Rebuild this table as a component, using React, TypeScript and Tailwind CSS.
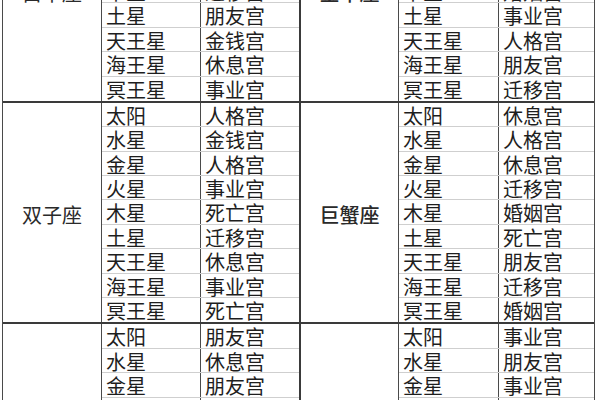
import React from "react";

type Half = { sign: string; rows: [string, string][] };
type Group = { left: Half; right: Half };

const groups: Group[] = [
  {
    left: {
      sign: "白羊座",
      rows: [
        ["太阳", "人格宫"],
        ["水星", "金钱宫"],
        ["金星", "事业宫"],
        ["火星", "婚姻宫"],
        ["木星", "迁移宫"],
        ["土星", "朋友宫"],
        ["天王星", "金钱宫"],
        ["海王星", "休息宫"],
        ["冥王星", "事业宫"],
      ],
    },
    right: {
      sign: "金牛座",
      rows: [
        ["太阳", "婚姻宫"],
        ["水星", "死亡宫"],
        ["金星", "休息宫"],
        ["火星", "朋友宫"],
        ["木星", "婚姻宫"],
        ["土星", "事业宫"],
        ["天王星", "人格宫"],
        ["海王星", "朋友宫"],
        ["冥王星", "迁移宫"],
      ],
    },
  },
  {
    left: {
      sign: "双子座",
      rows: [
        ["太阳", "人格宫"],
        ["水星", "金钱宫"],
        ["金星", "人格宫"],
        ["火星", "事业宫"],
        ["木星", "死亡宫"],
        ["土星", "迁移宫"],
        ["天王星", "休息宫"],
        ["海王星", "事业宫"],
        ["冥王星", "死亡宫"],
      ],
    },
    right: {
      sign: "巨蟹座",
      rows: [
        ["太阳", "休息宫"],
        ["水星", "人格宫"],
        ["金星", "休息宫"],
        ["火星", "迁移宫"],
        ["木星", "婚姻宫"],
        ["土星", "死亡宫"],
        ["天王星", "朋友宫"],
        ["海王星", "迁移宫"],
        ["冥王星", "婚姻宫"],
      ],
    },
  },
  {
    left: {
      sign: "狮子座",
      rows: [
        ["太阳", "朋友宫"],
        ["水星", "休息宫"],
        ["金星", "朋友宫"],
        ["火星", "事业宫"],
        ["木星", "金钱宫"],
        ["土星", "人格宫"],
        ["天王星", "迁移宫"],
        ["海王星", "婚姻宫"],
        ["冥王星", "死亡宫"],
      ],
    },
    right: {
      sign: "处女座",
      rows: [
        ["太阳", "事业宫"],
        ["水星", "朋友宫"],
        ["金星", "事业宫"],
        ["火星", "休息宫"],
        ["木星", "人格宫"],
        ["土星", "金钱宫"],
        ["天王星", "婚姻宫"],
        ["海王星", "死亡宫"],
        ["冥王星", "迁移宫"],
      ],
    },
  },
];

function LeftHalf({ half }: { half: Half }) {
  return (
    <div className="flex">
      <div className="w-[99px] border-r border-[#4a4a4a] flex items-center justify-center pt-[4px] text-[20px] leading-[24px] text-[#2a2a2a]">
        {half.sign}
      </div>
      <div className="w-[197px] flex flex-col">
        {half.rows.map(([p, h], i) => (
          <div
            key={i}
            className={
              "h-[24.4px] flex " +
              (i < half.rows.length - 1 ? "border-b border-[#cfcfcf]" : "")
            }
          >
            <div className="w-[99px] border-r border-[#4a4a4a] pl-[4px] pt-[2px] leading-[21px]">
              {p}
            </div>
            <div className="flex-1 pl-[4px] pt-[2px] leading-[21px]">{h}</div>
          </div>
        ))}
      </div>
    </div>
  );
}

function RightHalf({ half }: { half: Half }) {
  return (
    <div className="flex">
      <div className="w-[98px] border-r border-[#4a4a4a] flex items-center justify-center pt-[4px] text-[20px] leading-[24px] font-medium text-[#2a2a2a]">
        {half.sign}
      </div>
      <div className="w-[195px] flex flex-col">
        {half.rows.map(([p, h], i) => (
          <div
            key={i}
            className={
              "h-[24.4px] flex " +
              (i < half.rows.length - 1 ? "border-b border-[#cfcfcf]" : "")
            }
          >
            <div className="w-[100px] border-r border-[#4a4a4a] pl-[4px] pt-[2px] leading-[21px]">
              {p}
            </div>
            <div className="flex-1 pl-[4px] pt-[2px] leading-[21px]">{h}</div>
          </div>
        ))}
      </div>
    </div>
  );
}

export default function App() {
  return (
    <div
      className="w-[600px] h-[400px] overflow-hidden bg-white text-[20px] text-[#1e1e1e]"
      style={{ fontFamily: '"Noto Sans CJK SC", "Noto Sans", sans-serif' }}
    >
      <div className="mt-[-120.6px] ml-[2px] w-[593px] border-l border-r border-[#4a4a4a]">
        {groups.map((g, gi) => (
          <div key={gi} className="flex border-t-2 border-[#3a3a3a]">
            <LeftHalf half={g.left} />
            <div className="w-[2px] bg-[#3a3a3a]" />
            <RightHalf half={g.right} />
          </div>
        ))}
      </div>
    </div>
  );
}
